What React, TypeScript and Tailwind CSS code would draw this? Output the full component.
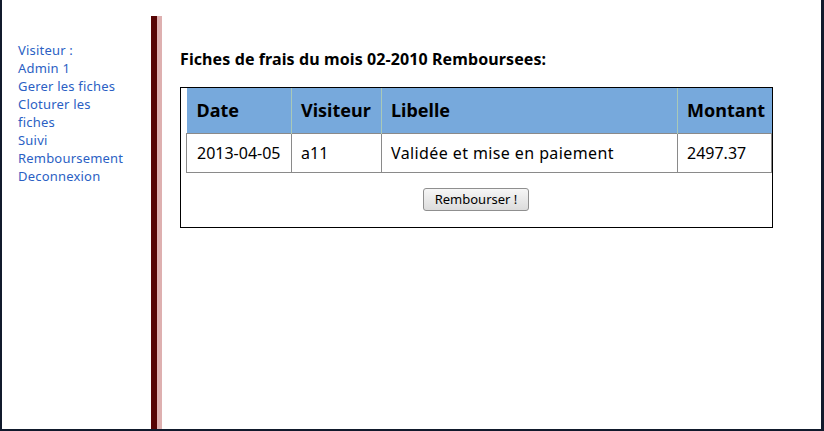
export default function App() {
  const menu = ["Visiteur :", "Admin 1", "Gerer les fiches", "Cloturer les fiches", "Suivi Remboursement", "Deconnexion"];
  return (
    <div className="w-[824px] h-[431px] bg-white font-['Noto_Sans',sans-serif]">
      <div className="flex h-[431px] border-l-2 border-r-[3px] border-b-2 border-[#111a2c] w-[824px]">
        <div className="w-[149px] shrink-0 pl-[16px] pt-[41px]">
          <div className="w-[108px] text-[13px] leading-[18px] text-[#2b5fc4] tracking-[0.2px]">
            {menu.map((m) => (
              <div key={m}>{m}</div>
            ))}
          </div>
        </div>
        <div className="flex shrink-0 pt-[16px]">
          <div className="w-[6px] h-full bg-[#570505]" />
          <div className="w-[5px] h-full bg-[#deb0b0]" />
        </div>
        <div className="pl-[18px] pt-[49px]">
          <h1 className="text-[16px] leading-[20px] font-bold text-black tracking-[0.1px]">Fiches de frais du mois 02-2010 Remboursees:</h1>
          <div className="mt-[18px] w-[593px] h-[141px] border border-black pl-[5px]">
            <table className="w-[586px] border-collapse text-black">
              <thead>
                <tr className="bg-[#77a9dc] h-[45px]">
                  <th className="w-[105px] text-left pl-[10px] text-[18px] font-bold border-r border-[#a9c9b8]">Date</th>
                  <th className="w-[90px] text-left pl-[9px] text-[18px] font-bold border-r border-[#a9c9b8]">Visiteur</th>
                  <th className="w-[296px] text-left pl-[9px] text-[18px] font-bold border-r border-[#a9c9b8]">Libelle</th>
                  <th className="text-left pl-[9px] text-[18px] font-bold">Montant</th>
                </tr>
              </thead>
              <tbody>
                <tr className="h-[39px] text-[16px]">
                  <td className="pl-[10px] border border-[#8a8a8a]">2013-04-05</td>
                  <td className="pl-[9px] border border-[#8a8a8a]">a11</td>
                  <td className="pl-[9px] border border-[#8a8a8a] tracking-[0.4px]">Validée et mise en paiement</td>
                  <td className="pl-[9px] border border-[#8a8a8a]">2497.37</td>
                </tr>
              </tbody>
            </table>
            <div className="flex justify-center pt-[15px] pr-[6px]">
              <button className="w-[106px] h-[23px] rounded-[3px] border border-[#8f8f8f] bg-gradient-to-b from-[#f6f6f6] to-[#dcdcdc] text-[13px] text-black leading-none">
                Rembourser !
              </button>
            </div>
          </div>
        </div>
      </div>
    </div>
  );
}
